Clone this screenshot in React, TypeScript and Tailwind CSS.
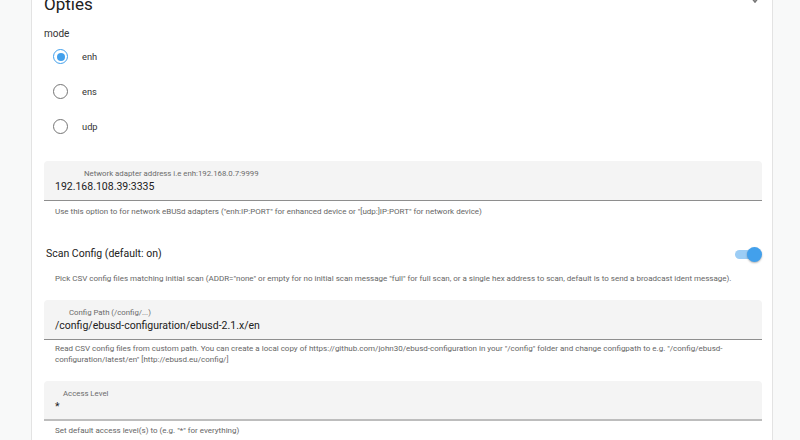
import React from "react";

const MODES = ["enh", "ens", "udp"];

function Radio({ checked }: { checked: boolean }) {
  return (
    <span
      className={`flex h-[15px] w-[15px] items-center justify-center rounded-full border-[1.5px] ${
        checked ? "border-[#42a0ec]" : "border-[#757575]"
      }`}
    >
      {checked && <span className="h-[8px] w-[8px] rounded-full bg-[#42a0ec]" />}
    </span>
  );
}

function Field({
  label,
  value,
  labelPad,
  thick,
}: {
  label: string;
  value: string;
  labelPad: string;
  thick?: boolean;
}) {
  return (
    <div
      className={`flex h-[40px] flex-col rounded-t-[4px] bg-[#f4f4f4] pl-[11px] pt-[8px] ${
        thick ? "border-b-2 border-[#bdbdbd]" : "border-b border-[#8e8e8e]"
      }`}
    >
      <span className={`text-[7.8px] leading-[10px] text-[#6b6b6b] ${labelPad}`}>{label}</span>
      <span className="text-[10.5px] leading-[15px] text-[#212121]">{value}</span>
    </div>
  );
}

function Helper({ children }: { children: React.ReactNode }) {
  return <p className="px-[11px] text-[8px] leading-[11px] text-[#666]">{children}</p>;
}

export default function App() {
  return (
    <div
      className="flex h-[440px] w-[800px] overflow-hidden bg-[#f8f9f9] pl-[31px] pr-[27px]"
      style={{ fontFamily: "Roboto, 'Noto Sans', sans-serif" }}
    >
      <div className="relative flex-1 border-x border-[#e3e3e3] bg-white pl-[12px] pr-[10px]">
        {/* chevron del encabezado */}
        <svg
          className="absolute right-[12px] top-[-8px]"
          width="10"
          height="11"
          viewBox="0 0 10 11"
          fill="none"
          stroke="#757575"
          strokeWidth={1.6}
        >
          <path d="M1 5l4 5 4-5" />
        </svg>

        <h2 className="-mt-[6px] text-[17px] leading-[20px] text-[#212121]">Opties</h2>

        <div className="mt-[13px] text-[10px] leading-[13px] text-[#333]">mode</div>

        <div className="-mt-[1px] flex flex-col">
          {MODES.map((m, i) => (
            <label key={m} className="flex h-[35px] items-center">
              <span className="ml-[9px] mr-[14px]">
                <Radio checked={i === 0} />
              </span>
              <span className="text-[9.3px] text-[#333]">{m}</span>
            </label>
          ))}
        </div>

        <div className="mt-[17px]">
          <Field
            label="Network adapter address i.e enh:192.168.0.7:9999"
            value="192.168.108.39:3335"
            labelPad="pl-[29px]"
          />
          <div className="mt-[5px]">
            <Helper>
              Use this option to for network eBUSd adapters ("enh:IP:PORT" for enhanced device or "[udp:]IP:PORT" for
              network device)
            </Helper>
          </div>
        </div>

        <div className="mt-[25px] flex h-[24px] items-center justify-between pl-[2px]">
          <span className="text-[10.5px] text-[#212121]">Scan Config (default: on)</span>
          <span className="relative flex h-[14px] w-[27px] items-center">
            <span className="h-[9px] w-[22px] rounded-full bg-[#9ccdf5]" />
            <span className="absolute right-0 h-[15px] w-[15px] rounded-full bg-[#42a0ec] shadow-[0_1px_2px_rgba(0,0,0,0.3)]" />
          </span>
        </div>

        <div className="mt-[7px]">
          <Helper>
            Pick CSV config files matching initial scan (ADDR="none" or empty for no initial scan message "full" for full
            scan, or a single hex address to scan, default is to send a broadcast ident message).
          </Helper>
        </div>

        <div className="mt-[16px]">
          <Field
            label="Config Path (/config/...)"
            value="/config/ebusd-configuration/ebusd-2.1.x/en"
            labelPad="pl-[14px]"
          />
          <div className="mt-[3px]">
            <Helper>
              Read CSV config files from custom path. You can create a local copy of
              https://github.com/john30/ebusd-configuration in your "/config" folder and change configpath to e.g.
              "/config/ebusd-configuration/latest/en" [http://ebusd.eu/config/]
            </Helper>
          </div>
        </div>

        <div className="mt-[16px]">
          <Field label="Access Level" value="*" labelPad="pl-[8px]" thick />
          <div className="mt-[4px]">
            <Helper>Set default access level(s) to (e.g. "*" for everything)</Helper>
          </div>
        </div>
      </div>
    </div>
  );
}
